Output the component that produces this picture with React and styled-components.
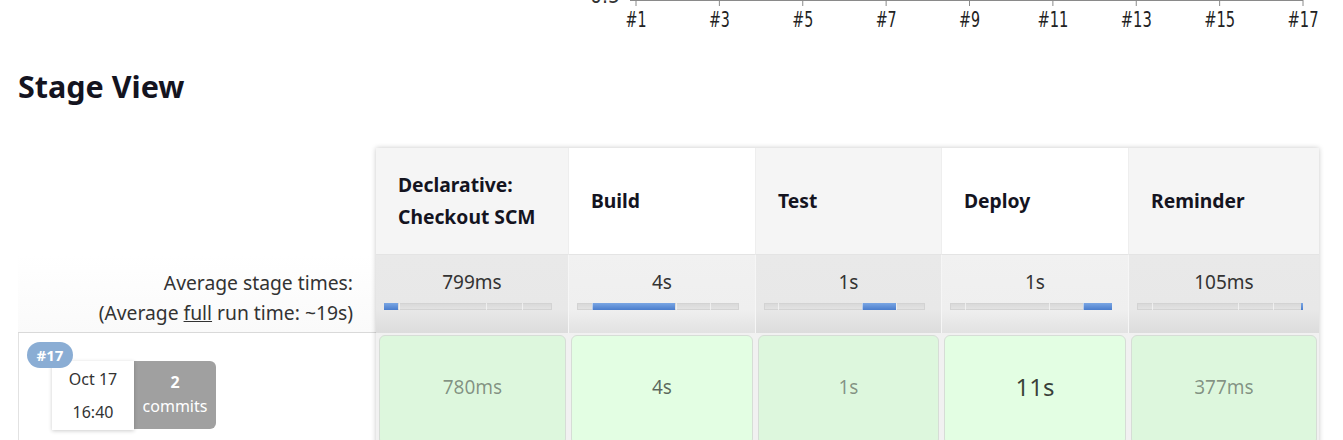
import React from "react";
import styled, { createGlobalStyle } from "styled-components";

const GlobalStyle = createGlobalStyle`
  body {
    margin: 0;
    background: #fff;
    color: #14141f;
    font-family: "Noto Sans", "Open Sans", sans-serif;
  }
`;

const stages = [
  { name: ["Declarative:", "Checkout SCM"], avg: "799ms", from: 0, to: 8.5, run: "780ms", tone: "light" },
  { name: ["Build"], avg: "4s", from: 9, to: 60.5, run: "4s", tone: "mid" },
  { name: ["Test"], avg: "1s", from: 61, to: 82, run: "1s", tone: "light" },
  { name: ["Deploy"], avg: "1s", from: 82, to: 100, run: "11s", tone: "strong" },
  { name: ["Reminder"], avg: "105ms", from: 98.8, to: 100, run: "377ms", tone: "light" },
];

const dividers = [9, 61, 82];

const ticks = ["#1", "#3", "#5", "#7", "#9", "#11", "#13", "#15", "#17"];

function Axis() {
  const x0 = 636;
  const step = 83.375;
  return (
    <AxisSvg width="1343" height="40" viewBox="0 0 1343 40">
      <line x1={x0 - 6} y1="0.5" x2={x0 + step * 8} y2="0.5" stroke="#8a8a8a" />
      <text x="620" y="3" textAnchor="end" fontSize="21" fill="#333">
        0.5
      </text>
      {ticks.map((t, i) => {
        const x = x0 + step * i;
        return (
          <g key={t}>
            <line x1={x} y1="0" x2={x} y2="6" stroke="#8a8a8a" />
            <text
              x={x}
              y="27"
              textAnchor="middle"
              fontSize="21"
              fill="#222"
              textLength={t.length === 2 ? 21 : 31}
              lengthAdjust="spacingAndGlyphs"
            >
              {t}
            </text>
          </g>
        );
      })}
    </AxisSvg>
  );
}

export default function App() {
  return (
    <Page>
      <GlobalStyle />
      <Axis />
      <Title>Stage View</Title>
      <StageView>
        <Labels>
          <LabelHead />
          <AvgLabel>
            <div>Average stage times:</div>
            <div>
              (Average <u>full</u> run time: ~19s)
            </div>
          </AvgLabel>
          <BuildLabel>
            <Badge>#17</Badge>
            <BuildMeta>
              <DateBox>
                <div>Oct 17</div>
                <div>16:40</div>
              </DateBox>
              <Commits>
                <b>2</b>
                <span>commits</span>
              </Commits>
            </BuildMeta>
          </BuildLabel>
        </Labels>

        <Table>
          <Row>
            {stages.map((s, i) => (
              <HeadCell key={i} $alt={i % 2 === 1}>
                <div>
                  {s.name.map((line) => (
                    <div key={line}>{line}</div>
                  ))}
                </div>
              </HeadCell>
            ))}
          </Row>
          <Row>
            {stages.map((s, i) => (
              <AvgCell key={i} $alt={i % 2 === 1}>
                <AvgTime>{s.avg}</AvgTime>
                <Track>
                  <Fill
                    style={{
                      marginLeft: s.from + "%",
                      width: s.to - s.from + "%",
                    }}
                  />
                  {dividers.map((d) => (
                    <Divider key={d} style={{ left: d + "%" }} />
                  ))}
                </Track>
              </AvgCell>
            ))}
          </Row>
          <BuildRow>
            {stages.map((s, i) => (
              <RunCell key={i} $alt={i % 2 === 1} $tone={s.tone}>
                {s.run}
              </RunCell>
            ))}
          </BuildRow>
        </Table>
      </StageView>
    </Page>
  );
}

const Page = styled.div`
  width: 1343px;
  height: 440px;
  overflow: hidden;
`;

const AxisSvg = styled.svg`
  display: block;
  font-family: "DejaVu Sans Condensed", "DejaVu Sans", sans-serif;
`;

const Title = styled.h2`
  margin: 28px 0 0 18px;
  font-size: 30.5px;
  line-height: 36px;
  font-weight: 700;
  color: #14141f;
`;

const StageView = styled.div`
  display: flex;
  margin: 44px 0 0 18px;
`;

const Labels = styled.div`
  width: 358px;
  display: flex;
  flex-direction: column;
`;

const LabelHead = styled.div`
  height: 107px;
`;

const AvgLabel = styled.div`
  height: 78px;
  box-sizing: border-box;
  padding: 13px 23px 0 0;
  text-align: right;
  font-size: 19.3px;
  line-height: 30px;
  color: #333;
  border-bottom: 1px solid #d9d9d9;
  background: linear-gradient(#fff, #fafafa);
`;

const BuildLabel = styled.div`
  position: relative;
  height: 120px;
  border-left: 1px solid #e2e2e2;
`;

const Badge = styled.div`
  position: absolute;
  z-index: 2;
  left: 8px;
  top: 9px;
  width: 46px;
  height: 26px;
  border-radius: 13px;
  background: #8aadd4;
  color: #fff;
  font-size: 15px;
  font-weight: 700;
  line-height: 26px;
  text-align: center;
`;

const BuildMeta = styled.div`
  display: flex;
  margin: 28px 0 0 33px;
`;

const DateBox = styled.div`
  position: relative;
  z-index: 1;
  width: 82px;
  height: 69px;
  box-sizing: border-box;
  padding-top: 2px;
  background: #fff;
  box-shadow: 0 1px 4px rgba(0, 0, 0, 0.2);
  text-align: center;
  font-size: 16px;
  line-height: 33px;
  color: #333;
`;

const Commits = styled.div`
  width: 82px;
  height: 68px;
  box-sizing: border-box;
  padding-top: 9px;
  border-radius: 0 6px 6px 0;
  background: #a0a0a0;
  color: #fff;
  font-size: 16px;
  line-height: 24px;
  text-align: center;
  display: flex;
  flex-direction: column;
`;

const Table = styled.div`
  width: 943px;
  display: flex;
  flex-direction: column;
  box-shadow: 0 0 5px rgba(0, 0, 0, 0.22);
`;

const Row = styled.div`
  display: grid;
  grid-template-columns: 192px 187px 186px 187px 191px;
`;

const HeadCell = styled.div`
  height: 107px;
  box-sizing: border-box;
  display: flex;
  align-items: center;
  padding-left: 22px;
  background: ${(p) => (p.$alt ? "#fff" : "#f5f5f5")};
  border-left: 1px solid #eeeeee;
  border-bottom: 1px solid #e4e4e4;
  font-size: 19.3px;
  font-weight: 700;
  line-height: 32px;
  color: #14141f;

  &:first-child {
    border-left: none;
  }
`;

const AvgCell = styled.div`
  height: 78px;
  box-sizing: border-box;
  padding: 14px 16px 0 8px;
  border-left: 1px solid #f6f6f6;
  background: ${(p) =>
    p.$alt
      ? "linear-gradient(#f1f1f1 0%, #efefef 70%, #e2e2e2 100%)"
      : "linear-gradient(#e9e9e9 0%, #e8e8e8 70%, #dcdcdc 100%)"};

  &:first-child {
    border-left: none;
  }
`;

const AvgTime = styled.div`
  text-align: center;
  font-size: 19px;
  line-height: 26px;
  color: #333;
  padding-left: 8px;
`;

const Track = styled.div`
  position: relative;
  display: flex;
  height: 7px;
  margin-top: 8px;
  background: linear-gradient(#d8d8d8, #e4e4e4);
  box-shadow: inset 0 0 0 1px #d3d3d3;
`;

const Fill = styled.div`
  height: 100%;
  background: linear-gradient(#7aa6e4, #4a7dcc);
`;

const Divider = styled.span`
  position: absolute;
  top: 0;
  width: 1px;
  height: 100%;
  background: rgba(255, 255, 255, 0.55);
`;

const BuildRow = styled(Row)`
  background: #f1f1f1;
  padding-top: 1px;
`;

const toneColor = {
  light: "rgba(0, 0, 0, 0.42)",
  mid: "rgba(0, 0, 0, 0.6)",
  strong: "rgba(0, 0, 0, 0.75)",
};

const RunCell = styled.div`
  height: 110px;
  margin: 1px 2px 0 3px;
  box-sizing: border-box;
  padding-top: 37px;
  border: 1px solid #d6ddd6;
  border-radius: 6px;
  background: ${(p) => (p.$alt ? "#e3fee3" : "#ddf7dd")};
  text-align: center;
  font-size: ${(p) => (p.$tone === "strong" ? "24px" : "19px")};
  line-height: 28px;
  color: ${(p) => toneColor[p.$tone]};
`;
